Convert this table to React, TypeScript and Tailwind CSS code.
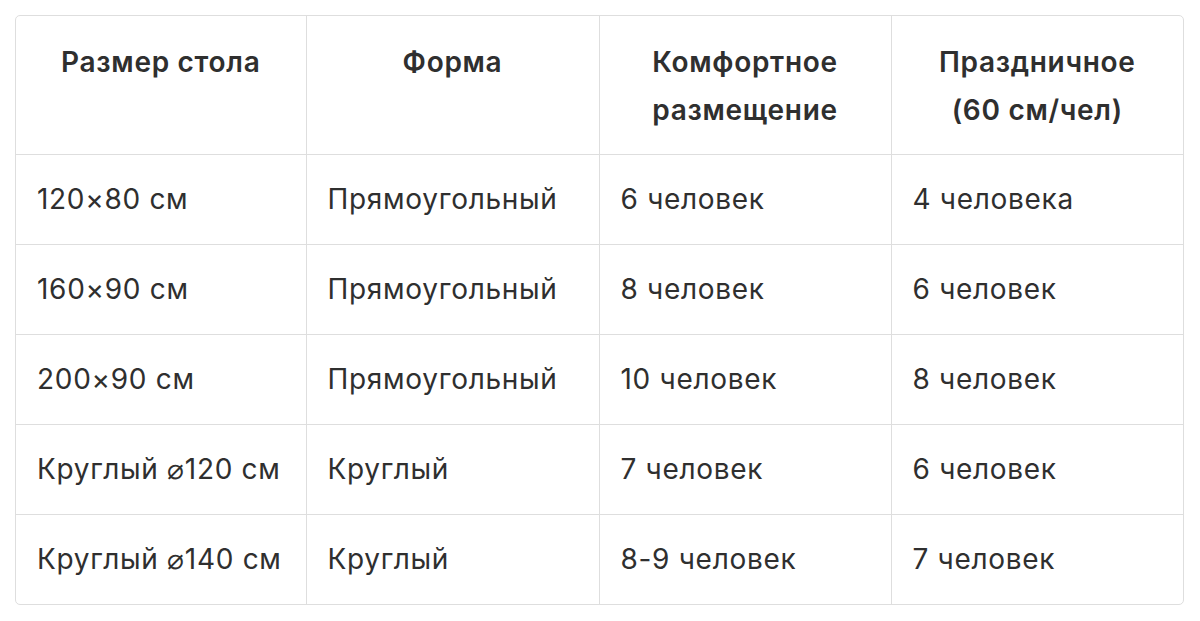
import React from 'react';

const header = ['Размер стола', 'Форма', 'Комфортное размещение', 'Праздничное (60 см/чел)'];

const rows: string[][] = [
  ['120×80 см', 'Прямоугольный', '6 человек', '4 человека'],
  ['160×90 см', 'Прямоугольный', '8 человек', '6 человек'],
  ['200×90 см', 'Прямоугольный', '10 человек', '8 человек'],
  ['Круглый ⌀120 см', 'Круглый', '7 человек', '6 человек'],
  ['Круглый ⌀140 см', 'Круглый', '8-9 человек', '7 человек'],
];

export default function App() {
  return (
    <div className="w-[1200px] h-[621px] bg-white pt-[15px] px-[15px]" style={{ fontFamily: 'Inter, "Noto Sans", sans-serif' }}>
      <div className="w-[1169px] border border-[#dedede] rounded-[5px] overflow-hidden">
        <table className="w-full table-fixed border-collapse text-[28px] tracking-[0.025em] text-[#2f2f2f]">
          <colgroup>
            <col className="w-[290px]" />
            <col className="w-[293px]" />
            <col className="w-[292px]" />
            <col />
          </colgroup>
          <thead>
            <tr>
              {header.map((h, i) => (
                <th
                  key={h}
                  className={`align-top text-center font-semibold leading-[48px] px-[30px] pt-[22px] pb-[20px] h-[138px] ${i > 0 ? 'border-l border-[#dedede]' : ''}`}
                >
                  {h}
                </th>
              ))}
            </tr>
          </thead>
          <tbody>
            {rows.map((r, ri) => (
              <tr key={ri} className="border-t border-[#dedede]">
                {r.map((c, ci) => (
                  <td
                    key={ci}
                    className={`text-left font-normal leading-[47px] pl-[21px] pr-1 py-[21px] whitespace-nowrap ${ci > 0 ? 'border-l border-[#dedede]' : ''}`}
                  >
                    {c}
                  </td>
                ))}
              </tr>
            ))}
          </tbody>
        </table>
      </div>
    </div>
  );
}
